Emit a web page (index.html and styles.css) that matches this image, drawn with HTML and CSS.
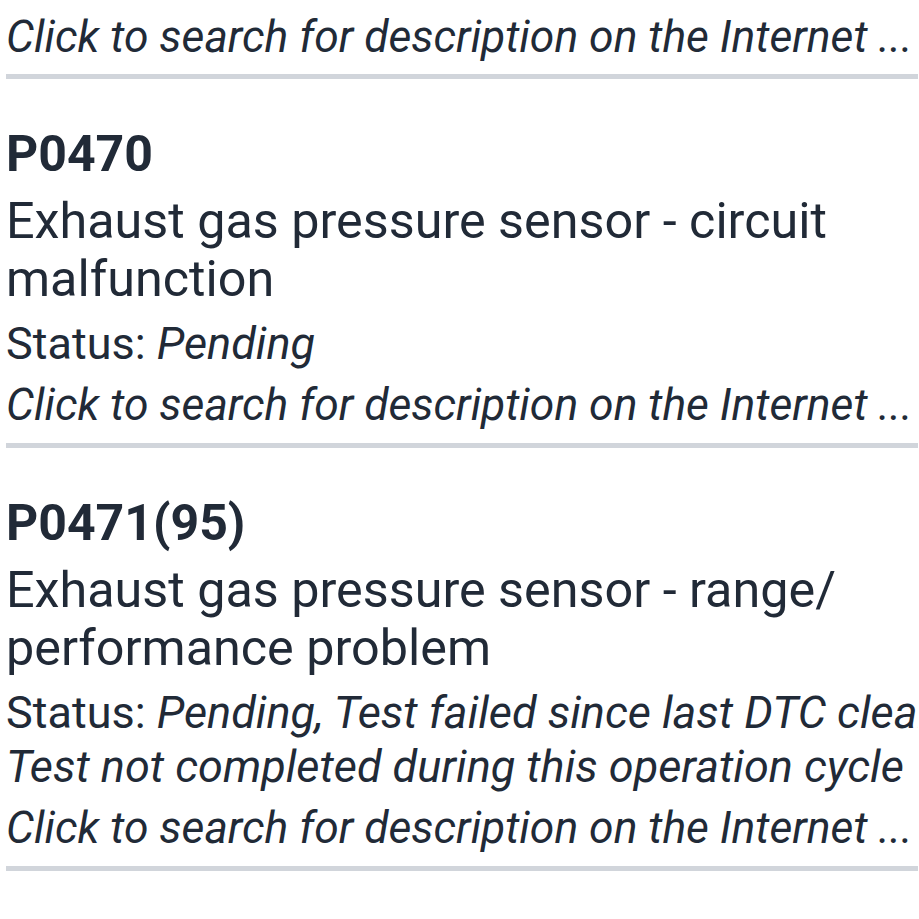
FILE: index.html
```
<!DOCTYPE html>
<html lang="en">
<head>
<meta charset="utf-8">
<title>DTC list</title>
<link rel="stylesheet" href="styles.css">
</head>
<body>
<div class="list">
  <div class="item item-partial">
    <div class="link">Click to search for description on the Internet ...</div>
  </div>
  <div class="item">
    <div class="code">P0470</div>
    <div class="desc">Exhaust gas pressure sensor - circuit malfunction</div>
    <div class="status">Status: <em>Pending</em></div>
    <div class="link">Click to search for description on the Internet ...</div>
  </div>
  <div class="item">
    <div class="code">P0471(95)</div>
    <div class="desc">Exhaust gas pressure sensor - range/ performance problem</div>
    <div class="status">Status: <em>Pending, Test failed since last DTC clear<br>Test not completed during this operation cycle</em></div>
    <div class="link">Click to search for description on the Internet ...</div>
  </div>
</div>
</body>
</html>
```
FILE: styles.css
```
html, body {
  margin: 0;
  padding: 0;
  background: #ffffff;
  overflow: hidden;
}
body {
  font-family: Roboto, "Noto Sans", "Liberation Sans", sans-serif;
  color: #212a37;
  width: 919px;
  height: 919px;
}
.list {
  display: flex;
  flex-direction: column;
  padding-left: 6px;
  padding-right: 1px;
}
.item {
  padding-top: 45px;
  padding-bottom: 11px;
  border-bottom: 5px solid #d1d5db;
  overflow: hidden;
  white-space: nowrap;
}
.item-partial {
  padding-top: 10px;
  padding-bottom: 10px;
}
.code {
  font-size: 50px;
  line-height: 60px;
  font-weight: 700;
  margin-bottom: 8px;
}
.desc {
  font-size: 50.3px;
  line-height: 58px;
  white-space: normal;
  margin-bottom: 9px;
  padding-right: 40px;
}
.status {
  font-size: 45px;
  line-height: 54px;
  margin-bottom: 7px;
}
.status em {
  font-style: italic;
}
.link {
  font-size: 44.4px;
  line-height: 54px;
  font-style: italic;
}
```
